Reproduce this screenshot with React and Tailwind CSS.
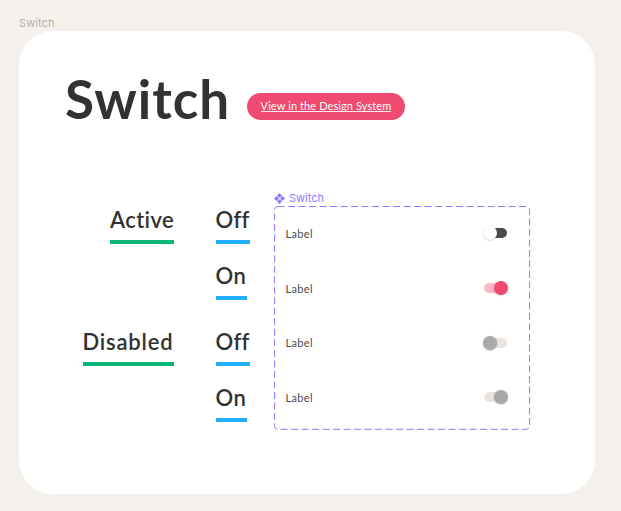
const HEADING_FONT = "font-['Lato',sans-serif]";

function Caption({ text, tone, width, spacing }) {
  return (
    <div className={`flex h-[38px] flex-col justify-between whitespace-nowrap ${width}`}>
      <span className={`block h-7 text-[22px] leading-[28px] font-semibold text-[#323232] ${HEADING_FONT} ${spacing}`}>
        {text}
      </span>
      <span className={`block h-[3.5px] w-full ${tone}`} />
    </div>
  );
}

function Toggle({ on, track, thumb }) {
  return (
    <span className="relative block h-[14px] w-[25px]">
      <span className={`absolute top-[2px] h-[10px] w-[23px] rounded-full ${on ? "left-[1.5px]" : "left-[1.5px]"} ${track}`} />
      <span className={`absolute top-0 size-[14px] rounded-full shadow-[0_0.5px_1.5px_rgba(0,0,0,0.25)] ${on ? "left-[11.5px]" : "left-[0.5px]"} ${thumb}`} />
    </span>
  );
}

function SwitchRow(props) {
  return (
    <div className="flex h-[54.7px] items-center justify-between pr-[24px] pl-[11.5px]">
      <span className={`pt-px text-[11px] leading-[14px] tracking-[0.35px] text-[#4b4b4b] ${HEADING_FONT}`}>Label</span>
      <Toggle {...props} />
    </div>
  );
}

export default function App() {
  return (
    <div className="h-[511px] w-[621px] overflow-hidden bg-[#f4f1ec] pt-4 pl-[19px]">
      <div className="h-[15px] font-['Inter',sans-serif] text-[11px] leading-[14px] tracking-[0.1px] text-[#b3b1ad]">Switch</div>
      <main className="h-[463px] w-[576px] rounded-[34px] bg-white pt-[33px]">
        <header className="flex h-[70px] items-center pl-[46px]">
          <h1 className={`w-[182px] text-[53px] leading-[70px] font-bold tracking-[1px] text-[#323232] ${HEADING_FONT}`}>Switch</h1>
          <a className="mt-[14px] flex h-[27px] w-[158px] items-center justify-center rounded-full bg-[#f04a70]">
            <span className={`border-b border-white/90 pt-px text-[11px] leading-[10px] tracking-[0.1px] whitespace-nowrap text-white ${HEADING_FONT}`}>
              View in the Design System
            </span>
          </a>
        </header>
        <div className="flex pt-[56px] pl-[63px]">
          <div className="flex w-[91.5px] flex-col items-end gap-[84px] pt-[15.5px]">
            <Caption text="Active" tone="bg-[#08b574]" width="w-[63.5px]" spacing="tracking-[0.4px]" />
            <Caption text="Disabled" tone="bg-[#08b574]" width="w-[91px]" spacing="tracking-[0.8px]" />
          </div>
          <div className="ml-[42px] flex w-[58.5px] flex-col pt-[15.5px]">
            <Caption text="Off" tone="bg-[#20b0fa]" width="w-[34px]" spacing="tracking-[0.3px]" />
            <div className="mt-[18px] mb-[28px]">
              <Caption text="On" tone="bg-[#20b0fa]" width="w-[31px]" spacing="tracking-[0.5px]" />
            </div>
            <Caption text="Off" tone="bg-[#20b0fa]" width="w-[34px]" spacing="tracking-[0.3px]" />
            <div className="mt-[18px]">
              <Caption text="On" tone="bg-[#20b0fa]" width="w-[31px]" spacing="tracking-[0.5px]" />
            </div>
          </div>
          <section className="w-[257px]">
            <div className="flex h-[16px] items-start gap-[4px] pt-px text-[#9478fa]">
              <svg className="mt-[2px]" width="11" height="11" viewBox="0 0 11 11" fill="currentColor">
                <path d="M5.5 0 8 2.5 5.5 5 3 2.5ZM2.5 3 5 5.5 2.5 8 0 5.5ZM8.5 3 11 5.5 8.5 8 6 5.5ZM5.5 6 8 8.5 5.5 11 3 8.5Z" />
              </svg>
              <span className="font-['Inter',sans-serif] text-[11px] leading-[14px]">Switch</span>
            </div>
            <div className="relative h-[224px]">
              <svg className="absolute top-0 left-0" width="257" height="224" fill="none">
                <rect x="0.6" y="0.5" width="255" height="222.8" rx="3" stroke="#9478fa" strokeWidth="1" strokeDasharray="7 3.5" />
              </svg>
              <SwitchRow on={false} track="bg-[#4b4b4b]" thumb="bg-white" />
              <SwitchRow on track="bg-[#fab7c8]" thumb="bg-[#f04a70]" />
              <SwitchRow on={false} track="bg-[#e9e4de]" thumb="bg-[#a9a9a9]" />
              <SwitchRow on track="bg-[#e9e4de]" thumb="bg-[#a9a9a9]" />
            </div>
          </section>
        </div>
      </main>
    </div>
  );
}
